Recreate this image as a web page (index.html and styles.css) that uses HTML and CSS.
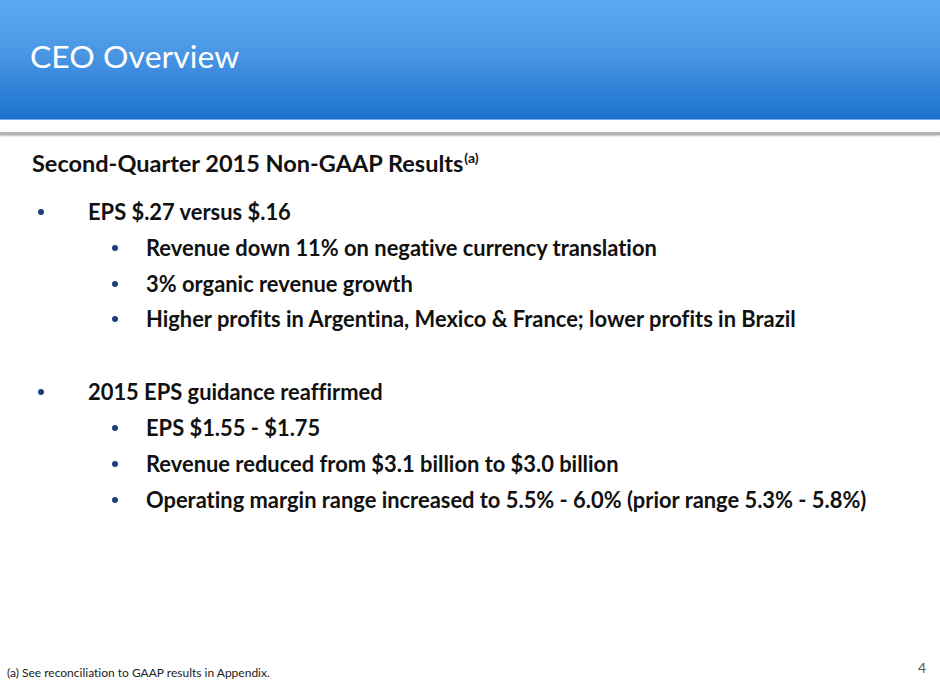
FILE: index.html
```html
<!DOCTYPE html>
<html lang="en">
<head>
<meta charset="utf-8">
<title>CEO Overview</title>
<link rel="stylesheet" href="styles.css">
</head>
<body>
<div class="slide">
  <header class="banner">
    <h1 class="title">CEO Overview</h1>
  </header>
  <div class="rule"></div>
  <main class="content">
    <h2 class="heading">Second-Quarter 2015 Non-GAAP Results<sup class="note">(a)</sup></h2>
    <ul class="list">
      <li class="item">EPS $.27 versus $.16
        <ul class="sublist">
          <li class="subitem">Revenue down 11% on negative currency translation</li>
          <li class="subitem">3% organic revenue growth</li>
          <li class="subitem">Higher profits in Argentina, Mexico &amp; France; lower profits in Brazil</li>
        </ul>
      </li>
      <li class="item item-gap">2015 EPS guidance reaffirmed
        <ul class="sublist">
          <li class="subitem">EPS $1.55 - $1.75</li>
          <li class="subitem">Revenue reduced from $3.1 billion to $3.0 billion</li>
          <li class="subitem">Operating margin range increased to 5.5% - 6.0% (prior range 5.3% - 5.8%)</li>
        </ul>
      </li>
    </ul>
  </main>
  <footer class="footer">
    <span class="footnote">(a) See reconciliation to GAAP results in Appendix.</span>
    <span class="pagenum">4</span>
  </footer>
</div>
</body>
</html>
```

FILE: styles.css
```css
* { box-sizing: border-box; }
html, body { margin: 0; padding: 0; background: #ffffff; }
body {
  font-family: Lato, "Open Sans", "Liberation Sans", sans-serif;
  color: #111111;
  font-variant-ligatures: none;
}

.slide {
  width: 940px;
  height: 686px;
  display: flex;
  flex-direction: column;
  overflow: hidden;
}

.banner {
  height: 120px;
  flex: none;
  background: linear-gradient(to bottom, #5aa9f1 0%, #4a96e4 45%, #1c72cd 100%);
  border-bottom: 1px solid #6fb0ee;
  padding: 36px 0 0 30px;
}
.title {
  margin: 0;
  font-weight: 400;
  font-size: 31.8px;
  line-height: 40px;
  color: #ffffff;
  letter-spacing: 0.1px;
}

.rule {
  flex: none;
  height: 3px;
  margin-top: 12px;
  background: #b3b3b3;
  box-shadow: 0 1px 2px rgba(0,0,0,0.25);
}

.content {
  flex: 1;
  padding: 13px 0 0 32px;
}
.heading {
  margin: 0;
  font-size: 23.5px;
  line-height: 30px;
  font-weight: 700;
}
.note {
  font-size: 14px;
  vertical-align: 9px;
  line-height: 0;
  margin-left: 1px;
}

.list, .sublist { list-style: none; margin: 0; padding: 0; }
.list { margin-top: 16px; }
.item, .subitem {
  position: relative;
  font-size: 21.9px;
  line-height: 35.8px;
  font-weight: 700;
}
.item { padding-left: 56px; }
.item-gap { margin-top: 37px; }
.sublist { margin-left: -56px; }
.subitem { padding-left: 114px; }
.item::before, .subitem::before {
  content: "";
  position: absolute;
  top: 15px;
  width: 6px;
  height: 6px;
  border-radius: 50%;
  background: #1f3f7a;
}
.item::before { left: 6px; }
.subitem::before { left: 80px; }

.footer {
  flex: none;
  height: 30px;
  display: flex;
  justify-content: space-between;
  align-items: flex-end;
  padding: 0 14px 6px 7px;
}
.footnote {
  font-size: 12px;
  line-height: 14px;
  color: #222222;
}
.pagenum {
  font-size: 14px;
  line-height: 16px;
  color: #595959;
  margin-bottom: 4px;
}
```
